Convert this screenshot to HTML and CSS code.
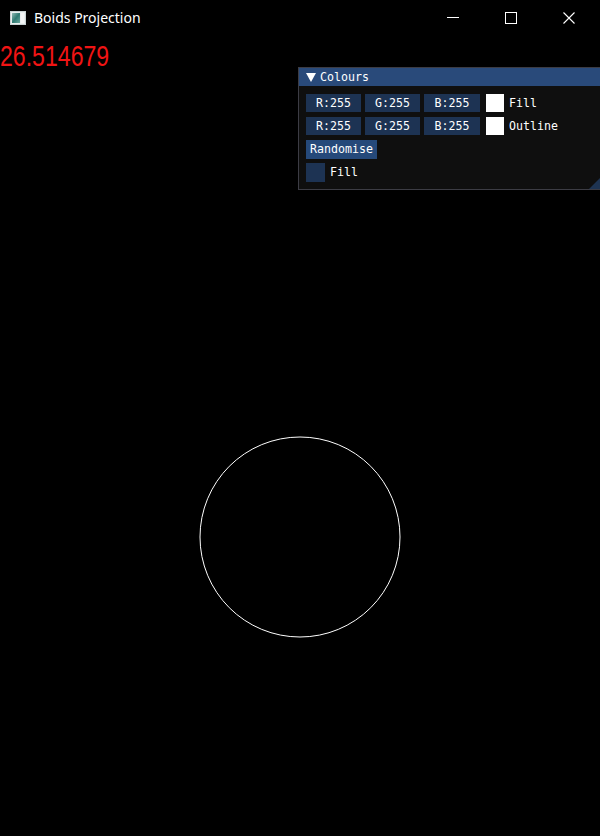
FILE: index.html
```html
<!DOCTYPE html>
<html>
<head>
<meta charset="utf-8">
<title>Boids Projection</title>
<link rel="stylesheet" href="styles.css">
</head>
<body>
<div class="app">
  <header class="titlebar">
    <svg class="app-icon" width="16" height="14" viewBox="0 0 16 14">
      <defs>
        <linearGradient id="g" x1="0" y1="0" x2="1" y2="1">
          <stop offset="0" stop-color="#8fb9b3"/>
          <stop offset="0.5" stop-color="#2f7a72"/>
          <stop offset="1" stop-color="#6aa79e"/>
        </linearGradient>
      </defs>
      <rect x="0.5" y="0.5" width="15" height="13" fill="#e8eeee" stroke="#c9d2d2"/>
      <rect x="2" y="2" width="8" height="10" fill="url(#g)"/>
      <rect x="11" y="2" width="3" height="10" fill="#f4f6f6"/>
    </svg>
    <span class="title">Boids Projection</span>
    <div class="controls">
      <div class="ctl"><svg width="12" height="12" viewBox="0 0 12 12"><line x1="0" y1="5.5" x2="12" y2="5.5" stroke="#fff" stroke-width="1"/></svg></div>
      <div class="ctl"><svg width="12" height="12" viewBox="0 0 12 12"><rect x="0.5" y="0.5" width="11" height="11" fill="none" stroke="#fff" stroke-width="1"/></svg></div>
      <div class="ctl"><svg width="12" height="12" viewBox="0 0 12 12"><path d="M0.5 0.5 L11.5 11.5 M11.5 0.5 L0.5 11.5" stroke="#fff" stroke-width="1.1" fill="none"/></svg></div>
    </div>
  </header>

  <main class="canvas">
    <div class="fps">26.514679</div>

    <svg class="boid" width="202" height="202" viewBox="0 0 202 202">
      <circle cx="101" cy="101" r="100" fill="none" stroke="#fff" stroke-width="1"/>
    </svg>

    <section class="imgui">
      <div class="im-title"><span class="arrow"></span><span>Colours</span></div>
      <div class="im-body">
        <div class="im-row">
          <div class="drag">R:255</div>
          <div class="drag">G:255</div>
          <div class="drag wide">B:255</div>
          <div class="swatch"></div>
          <span class="label">Fill</span>
        </div>
        <div class="im-row">
          <div class="drag">R:255</div>
          <div class="drag">G:255</div>
          <div class="drag wide">B:255</div>
          <div class="swatch"></div>
          <span class="label">Outline</span>
        </div>
        <div class="im-row">
          <div class="button">Randomise</div>
        </div>
        <div class="im-row">
          <div class="checkbox"></div>
          <span class="label">Fill</span>
        </div>
      </div>
      <div class="grip"></div>
    </section>
  </main>
</div>
</body>
</html>
```

FILE: styles.css
```css
html, body {
  margin: 0;
  padding: 0;
  background: #000;
}

.app {
  width: 600px;
  height: 836px;
  overflow: hidden;
  background: #000;
  position: relative;
}

.titlebar {
  height: 36px;
  display: flex;
  align-items: center;
  padding-left: 10px;
  font-family: "Noto Sans", "Open Sans", sans-serif;
  color: #fff;
}

.app-icon {
  display: block;
  margin-top: -1px;
}

.title {
  margin-left: 8px;
  font-size: 14px;
  line-height: 18px;
  margin-top: -1px;
}

.controls {
  margin-left: auto;
  display: flex;
  height: 36px;
  margin-right: 2px;
}

.ctl {
  width: 58px;
  height: 36px;
  display: flex;
  align-items: center;
  justify-content: center;
}

.ctl svg {
  display: block;
  margin-top: -1px;
}

.canvas {
  position: relative;
  height: 795px;
  padding-top: 5px;
}

.fps {
  font-family: "Liberation Sans", Arial, sans-serif;
  font-size: 30px;
  line-height: 30px;
  color: #f01414;
  transform: scaleX(0.77);
  transform-origin: 0 0;
  white-space: nowrap;
}

.boid {
  position: absolute;
  left: 199px;
  top: 400px;
  display: block;
}

.imgui {
  position: absolute;
  left: 298px;
  top: 31px;
  width: 302px;
  height: 123px;
  box-sizing: border-box;
  background: #0f0f0f;
  border: 1px solid #3c3c44;
  border-right: none;
  font-family: "DejaVu Sans Mono", "Liberation Mono", monospace;
  font-size: 11.6px;
  color: #fff;
}

.im-title {
  height: 18px;
  background: #294a7a;
  display: flex;
  align-items: center;
  padding-left: 7px;
  gap: 4px;
}

.arrow {
  width: 0;
  height: 0;
  border-left: 5px solid transparent;
  border-right: 5px solid transparent;
  border-top: 9px solid #fff;
  margin-top: 1px;
}

.im-body {
  padding: 8px 0 0 7px;
  display: flex;
  flex-direction: column;
  gap: 5px;
}

.im-row {
  display: flex;
  align-items: center;
  height: 18px;
  gap: 4px;
}

.drag {
  width: 55px;
  height: 18px;
  background: #1d3353;
  display: flex;
  align-items: center;
  justify-content: center;
}

.drag.wide {
  width: 56px;
}

.swatch {
  width: 18px;
  height: 18px;
  background: #fff;
  margin-left: 2px;
}

.label {
  margin-left: 1px;
  line-height: 18px;
}

.button {
  width: 71px;
  height: 19px;
  background: #25497a;
  display: flex;
  align-items: center;
  justify-content: center;
}

.checkbox {
  width: 19px;
  height: 19px;
  background: #1d3353;
}

.grip {
  position: absolute;
  right: 0;
  bottom: 0;
  width: 0;
  height: 0;
  border-left: 11px solid transparent;
  border-bottom: 11px solid #1e3452;
}
```
